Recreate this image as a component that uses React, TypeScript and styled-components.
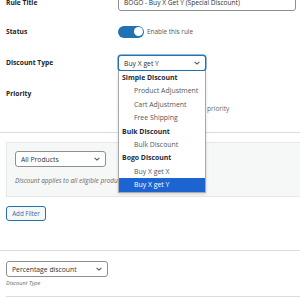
import styled, { createGlobalStyle } from "styled-components";

const GlobalStyle = createGlobalStyle`
  html, body {
    margin: 0;
    padding: 0;
    background: #fff;
    overflow: hidden;
  }
  body {
    font-family: "Open Sans", "Noto Sans", sans-serif;
    color: #1d2327;
  }
`;

interface Option {
  label: string;
  group?: boolean;
  selected?: boolean;
}

const options: Option[] = [
  { label: "Simple Discount", group: true },
  { label: "Product Adjustment" },
  { label: "Cart Adjustment" },
  { label: "Free Shipping" },
  { label: "Bulk Discount", group: true },
  { label: "Bulk Discount" },
  { label: "Bogo Discount", group: true },
  { label: "Buy X get X" },
  { label: "Buy X get Y", selected: true },
];

function Chevron() {
  return (
    <svg width="6" height="4" viewBox="0 0 6 4">
      <path d="M0.6 0.8 L3 3.1 L5.4 0.8" fill="none" stroke="#50575e" strokeWidth="1.1" />
    </svg>
  );
}

export default function App() {
  return (
    <>
      <GlobalStyle />
      <Page>
        <FormTable>
          <TitleRow>
            <Label>Rule Title</Label>
            <TextInput>BOGO - Buy X Get Y (Special Discount)</TextInput>
          </TitleRow>
          <Row $height={31}>
            <Label>Status</Label>
            <ToggleWrap>
              <Toggle>
                <Knob />
              </Toggle>
              <ToggleText>Enable this rule</ToggleText>
            </ToggleWrap>
          </Row>
          <Row $height={32}>
            <Label>Discount Type</Label>
            <SelectWrap>
              <Select $width={88} $focused>
                <span>Buy X get Y</span>
                <Chevron />
              </Select>
              <Dropdown>
                {options.map((o, i) =>
                  o.group ? (
                    <GroupLabel key={i}>{o.label}</GroupLabel>
                  ) : (
                    <OptionItem key={i} $selected={o.selected}>
                      {o.label}
                    </OptionItem>
                  )
                )}
              </Dropdown>
            </SelectWrap>
          </Row>
          <PriorityRow>
            <Label>Priority</Label>
            <Field>
              <NumberInput>10</NumberInput>
              <Hint>Lower numbers run first, set priority</Hint>
            </Field>
          </PriorityRow>
        </FormTable>

        <Divider />

        <FilterSection>
          <Panel>
            <Select $width={91}>
              <span>All Products</span>
              <Chevron />
            </Select>
            <Note>Discount applies to all eligible products in the cart</Note>
          </Panel>
          <AddButton>Add Filter</AddButton>
        </FilterSection>

        <Divider $top={29} />

        <TypeSection>
          <Select $width={102}>
            <span>Percentage discount</span>
            <Chevron />
          </Select>
          <SmallHint>Discount Type</SmallHint>
        </TypeSection>

        <Divider $top={9} $inset />
      </Page>
    </>
  );
}

const Page = styled.div`
  margin-top: -11px;
  width: 320px;
`;

const FormTable = styled.div`
  display: flex;
  flex-direction: column;
  padding-left: 6px;
`;

const Row = styled.div<{ $height: number }>`
  display: flex;
  align-items: center;
  height: ${(p) => p.$height}px;
`;

const TitleRow = styled.div`
  display: flex;
  align-items: center;
  height: 27px;
`;

const PriorityRow = styled.div`
  display: flex;
  align-items: flex-start;
  height: 53px;
  padding-top: 7px;
  box-sizing: border-box;
`;

const Label = styled.div`
  width: 112px;
  flex-shrink: 0;
  font-size: 6.7px;
  font-weight: 700;
  color: #1d2327;
  line-height: 16px;
`;

const Field = styled.div`
  display: flex;
  flex-direction: column;
  gap: 2px;
`;

const TextInput = styled.div`
  width: 178px;
  height: 17px;
  box-sizing: border-box;
  border: 1px solid #8c8f94;
  border-radius: 3px;
  padding: 0 5px;
  font-size: 6.6px;
  line-height: 15px;
  color: #2c3338;
  white-space: nowrap;
  overflow: hidden;
`;

const NumberInput = styled(TextInput)`
  width: 60px;
  height: 16px;
  line-height: 14px;
`;

const Hint = styled.div`
  font-size: 6.6px;
  line-height: 10px;
  color: #646970;
  white-space: nowrap;
`;

const ToggleWrap = styled.div`
  display: flex;
  align-items: center;
  gap: 3px;
`;

const Toggle = styled.div`
  width: 26px;
  height: 12px;
  border-radius: 6px;
  background: #2271b1;
  display: flex;
  align-items: center;
  justify-content: flex-end;
  padding: 0 1.5px;
  box-sizing: border-box;
`;

const Knob = styled.div`
  width: 9px;
  height: 9px;
  border-radius: 50%;
  background: #fff;
`;

const ToggleText = styled.span`
  font-size: 6.4px;
  color: #50575e;
`;

const SelectWrap = styled.div`
  position: relative;
`;

const Select = styled.div<{ $width: number; $focused?: boolean }>`
  width: ${(p) => p.$width}px;
  height: 16px;
  box-sizing: border-box;
  border: 1px solid ${(p) => (p.$focused ? "#2271b1" : "#8c8f94")};
  box-shadow: ${(p) => (p.$focused ? "0 0 0 0.5px #2271b1" : "none")};
  border-radius: 3px;
  background: #fff;
  display: flex;
  align-items: center;
  justify-content: space-between;
  padding: 0 5px 0 5px;
  font-size: 6.8px;
  color: #2c3338;
  white-space: nowrap;
`;

const Dropdown = styled.div`
  position: absolute;
  top: 16px;
  left: 0;
  width: 88px;
  box-sizing: border-box;
  border: 1px solid #a7aaad;
  border-top: none;
  background: #fff;
  box-shadow: 0 1px 3px rgba(0, 0, 0, 0.15);
  z-index: 10;
`;

const GroupLabel = styled.div`
  height: 13.4px;
  line-height: 13.4px;
  padding-left: 3px;
  font-size: 6.9px;
  font-weight: 700;
  color: #1d2b3a;
  white-space: nowrap;
`;

const OptionItem = styled.div<{ $selected?: boolean }>`
  height: 13.4px;
  line-height: 13.4px;
  padding-left: 15px;
  font-size: 6.9px;
  color: ${(p) => (p.$selected ? "#fff" : "#50575e")};
  background: ${(p) => (p.$selected ? "#1c64d1" : "transparent")};
  white-space: nowrap;
`;

const Divider = styled.div<{ $top?: number; $inset?: boolean }>`
  height: 1px;
  background: #dcdcde;
  margin-top: ${(p) => p.$top ?? 0}px;
  margin-left: ${(p) => (p.$inset ? 6 : 0)}px;
`;

const FilterSection = styled.div`
  display: flex;
  flex-direction: column;
  align-items: flex-start;
  padding: 9px 0 0 6px;
`;

const Panel = styled.div`
  align-self: stretch;
  height: 55px;
  box-sizing: border-box;
  background: #f6f7f7;
  border: 1px solid #e6e7e8;
  padding: 8px 8px;
  display: flex;
  flex-direction: column;
  gap: 9px;
`;

const Note = styled.div`
  font-size: 6.4px;
  font-style: italic;
  color: #646970;
  white-space: nowrap;
`;

const AddButton = styled.button`
  margin-top: 9px;
  width: 40px;
  height: 15px;
  padding: 0;
  box-sizing: border-box;
  border: 1px solid #2271b1;
  border-radius: 3px;
  background: #f6f7f7;
  color: #2271b1;
  font-family: "Open Sans", "Noto Sans", sans-serif;
  font-size: 6.2px;
`;

const TypeSection = styled.div`
  display: flex;
  flex-direction: column;
  gap: 2px;
  padding: 10px 0 0 6px;
`;

const SmallHint = styled.div`
  font-size: 5.6px;
  font-style: italic;
  color: #646970;
  line-height: 8px;
`;
